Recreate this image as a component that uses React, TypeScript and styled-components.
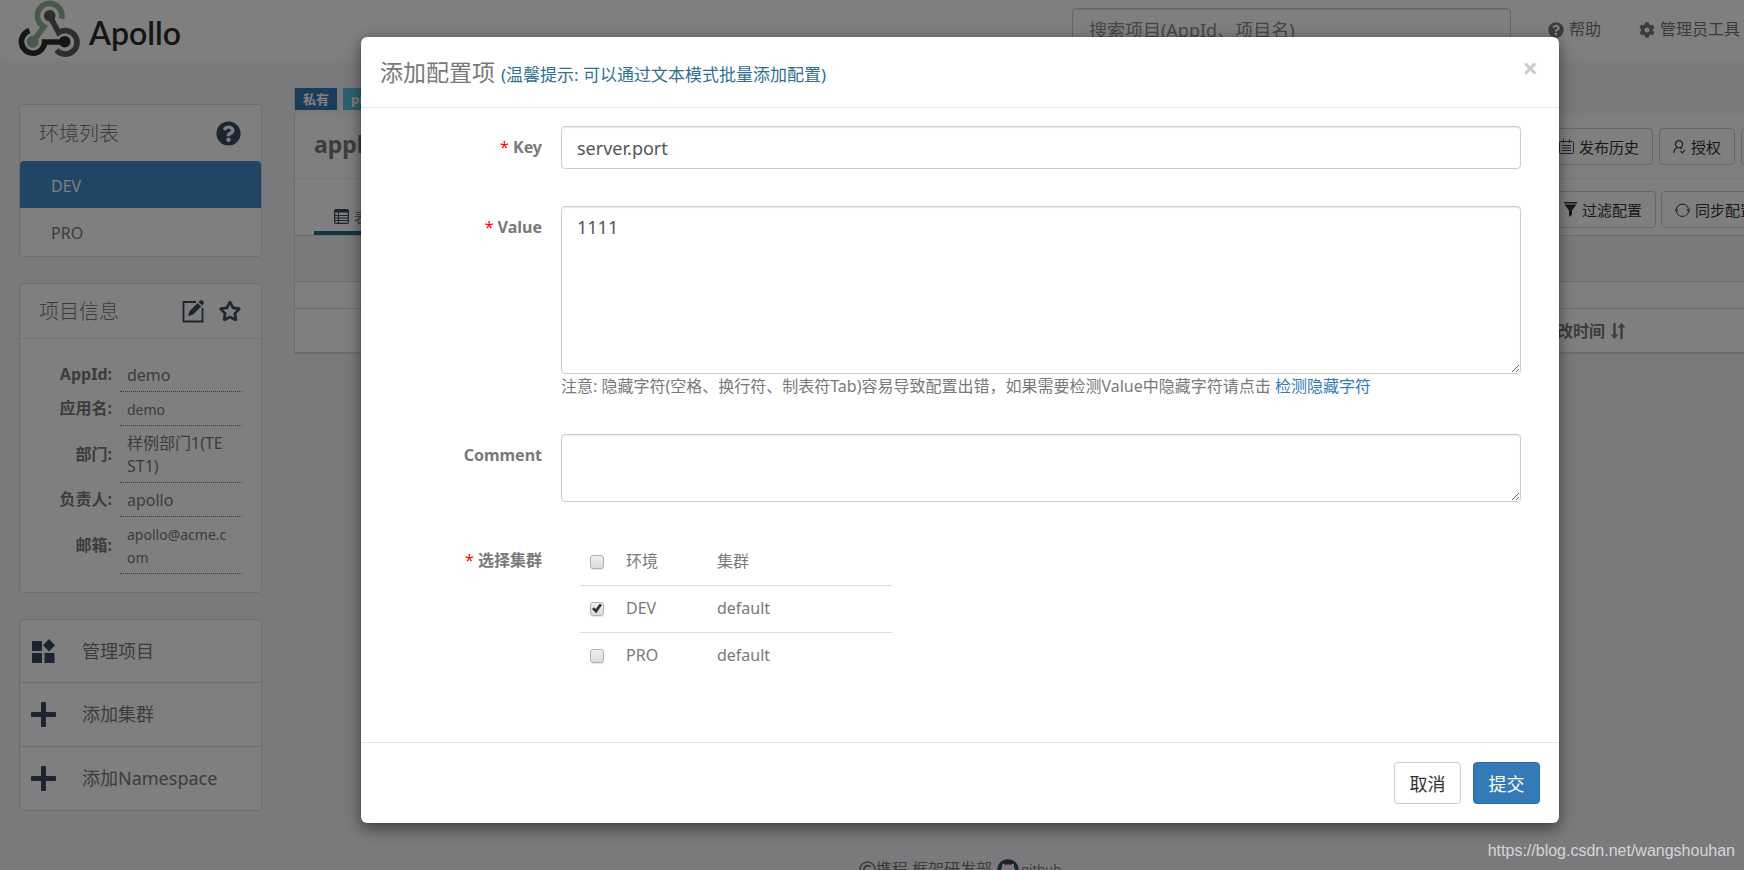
import React from "react";
import styled, { createGlobalStyle, css } from "styled-components";
import { FaQuestionCircle, FaRegStar, FaCog, FaGithub, FaRegCopyright } from "react-icons/fa";

const NAVY = "#364a63";
const LINE = "#dddddd";

const GlobalStyle = createGlobalStyle`
  *, *::before, *::after { box-sizing: border-box; }
  body {
    margin: 0;
    background: #f4f4f8;
    color: #797979;
    font-family: "Noto Sans", "Noto Sans CJK SC", sans-serif;
    font-size: 16px;
    line-height: 23px;
  }
  input, textarea, button { font-family: inherit; }
  h1, h2, h3, p, dl, dd, ul { margin: 0; padding: 0; font-weight: inherit; }
`;

const Viewport = styled.div`
  position: relative;
  height: 100vh;
  overflow: hidden;
`;

const Desktop = styled.div`
  position: relative;
  width: calc(100% + 176px);
  min-height: 100vh;
`;

/* ---------- top bar ---------- */

const NavBar = styled.header`
  display: flex;
  align-items: flex-start;
  height: 61px;
  padding: 0 180px 0 18px;
  background: #fff;
  border-radius: 4px;
`;

const Brand = styled.a`
  display: flex;
  align-items: center;
  gap: 8px;
  height: 60px;
  margin-right: auto;
  color: #2b2b2b;
  font-family: Lato, sans-serif;
  font-size: 32px;
  font-weight: 600;
  text-decoration: none;
  span { padding-top: 4px; }
`;

const SearchBox = styled.input`
  width: 439px;
  height: 43px;
  margin-top: 8px;
  padding: 0 16px;
  border: 1px solid #ccc;
  border-radius: 4px;
  background: #fff;
  box-shadow: inset 0 1px 1px rgba(0, 0, 0, 0.08);
  font-size: 18px;
  &::placeholder { color: #8c8c8c; opacity: 1; }
`;

const NavLinks = styled.nav`
  display: flex;
  gap: 38px;
  margin: 18px 0 0 37px;
`;

const NavLink = styled.a`
  display: flex;
  align-items: center;
  gap: 5px;
  color: #777;
  text-decoration: none;
  white-space: nowrap;
`;

/* ---------- page columns ---------- */

const Columns = styled.div`
  display: flex;
  align-items: flex-start;
  gap: 32px;
  padding: 25px 20px 18px 19px;
`;

const Sidebar = styled.aside`
  display: flex;
  flex: none;
  flex-direction: column;
  gap: 26px;
  width: 243px;
  padding-top: 18px;
`;

const Panel = styled.section`
  border: 1px solid ${LINE};
  border-radius: 4px;
  background: #fff;
`;

const PanelHead = styled.div<{ $ruled?: boolean }>`
  display: flex;
  align-items: center;
  gap: 14px;
  height: ${(p) => (p.$ruled ? "55px" : "56px")};
  padding: 0 20px 0 19px;
  border-bottom: ${(p) => (p.$ruled ? "1px solid #e6e6f0" : "0")};
  color: ${NAVY};
`;

const PanelTitle = styled.h2`
  margin-right: auto;
  color: #797979;
  font-size: 20px;
  font-weight: 300;
`;

const EnvLink = styled.a<{ $active?: boolean }>`
  display: flex;
  align-items: center;
  height: 48px;
  padding: 3px 31px 0;
  color: #797979;
  text-decoration: none;
  ${(p) =>
    p.$active &&
    css`
      height: 47px;
      border-radius: 4px 4px 0 0;
      background: #428bca;
      color: #fff;
    `}
`;

const Facts = styled.table`
  width: 100%;
  margin: 19px 0 18px;
  border-collapse: collapse;
  table-layout: fixed;
`;

const FactName = styled.th`
  width: 100px;
  padding: 0 8px 0 0;
  text-align: right;
  white-space: nowrap;
`;

const FactValue = styled.td<{ $small?: boolean }>`
  padding: 6px 12px 4px 7px;
  border-bottom: 1px dotted #797979;
  font-size: ${(p) => (p.$small ? "14px" : "16px")};
  word-break: break-all;
`;

const FactEnd = styled.td`
  width: 19px;
  padding: 0;
`;

const ActionLink = styled.a`
  display: flex;
  align-items: center;
  gap: 25px;
  height: 64px;
  padding: 0 11px;
  color: #797979;
  font-size: 18px;
  text-decoration: none;
  &:first-child { height: 62px; }
  & + & { border-top: 1px solid ${LINE}; }
  svg { flex: none; color: ${NAVY}; }
`;

/* ---------- namespace area ---------- */

const Namespace = styled.main`
  flex: 1;
  min-width: 0;
  border-left: 1px solid ${LINE};
  border-bottom: 2px solid ${LINE};
  margin-bottom: 20px;
`;

const Tags = styled.div`
  display: flex;
  gap: 6px;
  height: 29px;
  padding-top: 2px;
`;

const Tag = styled.span<{ $color: string }>`
  height: 22px;
  padding: 0 8px;
  background: ${(p) => p.$color};
  color: #fff;
  font-size: 13px;
  font-weight: 700;
  line-height: 22px;
`;

const TitleBar = styled.div`
  display: flex;
  align-items: center;
  gap: 6px;
  height: 64px;
  padding: 0 60px 0 19px;
  border-bottom: 1px solid #eee;
  background: #fff;
`;

const NamespaceTitle = styled.h1`
  margin-right: auto;
  padding-bottom: 4px;
  font-size: 23px;
  font-weight: 700;
`;

const TabBar = styled.div`
  display: flex;
  align-items: flex-start;
  gap: 5px;
  height: 56px;
  padding: 12px 56px 0 19px;
  background: #fff;
`;

const Tab = styled.button`
  display: flex;
  align-items: center;
  gap: 5px;
  height: 44px;
  margin-right: auto;
  padding: 10px 18px 0 20px;
  border: 0;
  border-bottom: 4px solid #1f6f86;
  background: none;
  color: #797979;
  font-size: 15px;
  svg { color: ${NAVY}; }
`;

const ToolButton = styled.button`
  display: flex;
  align-items: center;
  gap: 5px;
  height: 37px;
  padding: 0 13px;
  border: 1px solid #ccc;
  border-radius: 4px;
  background: #fff;
  color: #333;
  font-size: 15px;
  white-space: nowrap;
`;

const BlankButton = styled(ToolButton)<{ $width: number }>`
  width: ${(p) => p.$width}px;
`;

const GreyBand = styled.div`
  height: 47px;
  border-top: 1px solid ${LINE};
  border-bottom: 1px solid ${LINE};
  background: #f5f5f5;
`;

const WhiteBand = styled.div`
  height: 26px;
  background: #fff;
`;

const ItemTable = styled.table`
  width: 100%;
  border-collapse: collapse;
  border-top: 1px solid ${LINE};
  background: #fff;
  table-layout: fixed;
`;

const ItemHead = styled.th<{ $width?: number }>`
  width: ${(p) => (p.$width ? `${p.$width}px` : "auto")};
  height: 43px;
  padding: 2px 0 0;
  text-align: left;
  svg { margin-left: 5px; vertical-align: -2px; }
`;

const PageFooter = styled.footer`
  display: flex;
  justify-content: center;
  align-items: center;
  height: 80px;
  border-top: 1px solid #eeeef2;
  svg { flex: none; }
`;

const GithubLink = styled.a`
  display: flex;
  align-items: center;
  gap: 2px;
  margin-left: 5px;
  color: #797979;
  font-size: 13px;
  text-decoration: none;
  svg { color: ${NAVY}; }
`;

/* ---------- dialog ---------- */

const Backdrop = styled.div`
  position: absolute;
  inset: 0;
  display: flex;
  justify-content: center;
  align-items: flex-start;
  padding-top: 37px;
  background: rgba(0, 0, 0, 0.5);
`;

const Dialog = styled.form`
  width: 1198px;
  border-radius: 6px;
  background: #fff;
  box-shadow: 0 5px 15px rgba(0, 0, 0, 0.5), 0 0 1px rgba(0, 0, 0, 0.4);
`;

const DialogHead = styled.div`
  display: flex;
  justify-content: space-between;
  align-items: flex-start;
  height: 71px;
  padding: 19px 21px 0 19px;
  border-bottom: 1px solid #e5e5e5;
`;

const DialogTitle = styled.h2`
  font-size: 23px;
  line-height: 32px;
  small { color: #31708f; font-size: 17px; }
`;

const CloseButton = styled.button`
  padding: 0;
  border: 0;
  background: none;
  color: #ccc;
  font-size: 27px;
  font-weight: 700;
  line-height: 24px;
`;

const DialogBody = styled.div`
  display: grid;
  grid-template-columns: 181px 1fr;
  gap: 37px 19px;
  padding: 18px 38px 63px 0;
`;

const FieldName = styled.label`
  padding-top: 10px;
  font-weight: 700;
  text-align: right;
`;

const Required = styled.span`
  color: #f00;
  font-weight: 400;
`;

const fieldLook = css`
  display: block;
  width: 100%;
  padding: 7px 15px;
  border: 1px solid #ccc;
  border-radius: 4px;
  background: #fff;
  box-shadow: inset 0 1px 1px rgba(0, 0, 0, 0.08);
  color: #555;
  font-size: 18px;
  line-height: 27px;
`;

const TextInput = styled.input`
  ${fieldLook}
  height: 43px;
`;

const TextArea = styled.textarea<{ $height: number }>`
  ${fieldLook}
  height: ${(p) => p.$height}px;
  resize: vertical;
`;

const Hint = styled.p`
  padding-top: 1px;
  line-height: 22px;
  a { color: #337ab7; text-decoration: none; }
`;

const ClusterTable = styled.table`
  width: 312px;
  margin-left: 19px;
  border-collapse: collapse;
  table-layout: fixed;
  tr + tr { border-top: 1px solid ${LINE}; }
  tr:first-child td { height: 46px; }
`;

const ClusterCell = styled.td<{ $width?: number }>`
  width: ${(p) => (p.$width ? `${p.$width}px` : "auto")};
  height: 47px;
  padding: 0 0 0 8px;
  input { display: block; margin: 0 0 0 2px; }
`;

const Check = styled.input`
  position: relative;
  width: 14px;
  height: 14px;
  appearance: none;
  border: 1px solid #b0b0b0;
  border-radius: 3px;
  background: linear-gradient(#eee, #dcdcdc);
  box-shadow: 0 1px 1px rgba(0, 0, 0, 0.1);
  &:checked::before {
    content: "";
    position: absolute;
    inset: 1px;
    background: #333;
    clip-path: polygon(0 55%, 20% 38%, 38% 55%, 78% 0, 100% 14%, 42% 98%);
  }
`;

const DialogFoot = styled.div`
  display: flex;
  justify-content: flex-end;
  gap: 12px;
  padding: 19px;
  border-top: 1px solid #e5e5e5;
`;

const DialogButton = styled.button<{ $primary?: boolean }>`
  width: 67px;
  height: 42px;
  padding: 0;
  border: 1px solid ${(p) => (p.$primary ? "#2e6da4" : "#ccc")};
  border-radius: 4px;
  background: ${(p) => (p.$primary ? "#337ab7" : "#fff")};
  color: ${(p) => (p.$primary ? "#fff" : "#333")};
  font-size: 18px;
`;

const Watermark = styled.span`
  position: absolute;
  right: 9px;
  bottom: 8px;
  color: rgba(255, 255, 255, 0.7);
  font-family: "Liberation Sans", sans-serif;
  font-size: 16px;
`;

/* ---------- drawings ---------- */

const ApolloMark = () => (
  <svg width="63" height="60" viewBox="18 0 63 60" fill="none" aria-hidden="true">
    <g strokeWidth="5.6">
      <path d="M61.6 18.8A12.3 12.3 0 1 0 42.6 25.8L44 26.6L32.7 41.7" stroke="#8fb09a" />
      <path d="M49.7 15.7L58.6 32.6A11.8 11.8 0 1 1 56.4 50.2" stroke="#5e5a5c" />
      <path d="M29.4 30.6A11.6 11.6 0 1 0 44.6 42H64.7" stroke="#2a2a2b" />
    </g>
    <circle cx="32.7" cy="41.7" r="6" fill="#8fb09a" />
    <circle cx="49.7" cy="15.7" r="5.8" fill="#5e5a5c" />
    <circle cx="64.7" cy="41.7" r="5.8" fill="#2a2a2b" />
  </svg>
);

const EditIcon = () => (
  <svg width="24" height="24" viewBox="0 0 24 24" aria-hidden="true">
    <path d="M15 3H2.5V22.5H21.5V9" fill="none" stroke="currentColor" strokeWidth="1.8" />
    <path d="M7 17l1.6-5 8-8 3.6 3.6-8 8z" fill="currentColor" />
    <path d="M17.6 3l1.6-1.6q.9-.8 1.8 0l1.6 1.6q.9.9 0 1.8L21 6.4z" fill="currentColor" />
  </svg>
);

const BlocksIcon = () => (
  <svg width="26" height="26" viewBox="0 0 26 26" fill="currentColor" aria-hidden="true">
    <path d="M1 3h10v10H1zM1 15h10v10H1zM13.500 15h10v10h-10zM18 1l6 6.300-6 6.300-6-6.300z" />
  </svg>
);

const PlusIcon = () => (
  <svg width="26" height="26" viewBox="0 0 26 26" fill="currentColor" aria-hidden="true">
    <rect x="10" y="0" width="5" height="25" rx="1" />
    <rect x="0" y="10" width="25" height="5" rx="1" />
  </svg>
);

const ListIcon = () => (
  <svg width="15" height="15" viewBox="0 0 15 15" fill="none" stroke="currentColor" aria-hidden="true">
    <rect x="0.600" y="0.600" width="13.800" height="13.800" rx="1.500" strokeWidth="1.200" />
    <path d="M1 2h13" strokeWidth="3" />
    <path d="M4.500 2v12M1 6.500h13M1 9h13M1 11.500h13" />
  </svg>
);

const CalendarIcon = () => (
  <svg width="15" height="15" viewBox="0 0 15 15" fill="none" stroke={NAVY} aria-hidden="true">
    <rect x="0.500" y="2.500" width="14" height="12" rx="1" />
    <path d="M4.500 0v4M10.500 0v4M3 6.500h9M3 9h9M3 11.500h9" />
  </svg>
);

const UserIcon = () => (
  <svg width="13" height="14" viewBox="0 0 13 14" fill="none" stroke={NAVY} strokeWidth="1.200" aria-hidden="true">
    <circle cx="6" cy="4.200" r="3.500" />
    <path d="M4.500 7.500Q1 9 .7 13M7.500 7.500L9 9M7.500 11l1.800 1.800L12 10" />
  </svg>
);

const FunnelIcon = () => (
  <svg width="13" height="15" viewBox="0 0 13 15" fill="currentColor" aria-hidden="true">
    <path d="M0 0h13v1.500H0zM.5 2.500h12L8 8.500v4L5 15V8.500z" />
  </svg>
);

const SyncIcon = () => (
  <svg width="15" height="14" viewBox="0 0 15 14" fill="none" stroke={NAVY} strokeWidth="1.100" aria-hidden="true">
    <path d="M1.300 6.500A6.200 6.200 0 0 1 13.600 6.500M13.700 8A6.200 6.200 0 0 1 1.400 8M0 8l1.400-1.700L3 7.800M12 6.500l1.600 1.600L15 6.500" />
  </svg>
);

const SortIcon = () => (
  <svg width="16" height="16" viewBox="0 0 16 16" aria-hidden="true">
    <path d="M4.500 0v13M11.500 3v13" stroke="currentColor" strokeWidth="2.400" />
    <path d="M.5 11.500h8l-4 4.500zM7.500 4.500h8l-4-4.500z" fill="currentColor" />
  </svg>
);

/* ---------- data ---------- */

const facts = [
  { name: "AppId:", value: "demo" },
  { name: "应用名:", value: "demo", small: true },
  { name: "部门:", value: "样例部门1(TEST1)" },
  { name: "负责人:", value: "apollo" },
  { name: "邮箱:", value: "apollo@acme.com", small: true },
];

const clusters = [
  { env: "DEV", cluster: "default", checked: true },
  { env: "PRO", cluster: "default", checked: false },
];

export default function App() {
  return (
    <Viewport>
      <GlobalStyle />
      <Desktop>
        <NavBar>
          <Brand href="#"><ApolloMark /><span>Apollo</span></Brand>
          <SearchBox aria-label="搜索项目" placeholder="搜索项目(AppId、项目名)" />
          <NavLinks>
            <NavLink href="#"><FaQuestionCircle size={16} />帮助</NavLink>
            <NavLink href="#"><FaCog size={16} />管理员工具</NavLink>
          </NavLinks>
        </NavBar>

        <Columns>
          <Sidebar>
            <Panel>
              <PanelHead>
                <PanelTitle>环境列表</PanelTitle>
                <FaQuestionCircle size={25} />
              </PanelHead>
              <EnvLink href="#" $active>DEV</EnvLink>
              <EnvLink href="#">PRO</EnvLink>
            </Panel>

            <Panel>
              <PanelHead $ruled>
                <PanelTitle>项目信息</PanelTitle>
                <EditIcon />
                <FaRegStar size={22} stroke="currentColor" strokeWidth={24} />
              </PanelHead>
              <Facts>
                <tbody>
                  {facts.map((f) => (
                    <tr key={f.name}>
                      <FactName scope="row">{f.name}</FactName>
                      <FactValue $small={f.small}>{f.value}</FactValue>
                      <FactEnd />
                    </tr>
                  ))}
                </tbody>
              </Facts>
            </Panel>

            <Panel>
              <ActionLink href="#"><BlocksIcon />管理项目</ActionLink>
              <ActionLink href="#"><PlusIcon />添加集群</ActionLink>
              <ActionLink href="#"><PlusIcon />添加Namespace</ActionLink>
            </Panel>
          </Sidebar>

          <Namespace>
            <Tags>
              <Tag $color="#337ab7">私有</Tag>
              <Tag $color="#5bc0de">properties</Tag>
            </Tags>
            <TitleBar>
              <NamespaceTitle>application</NamespaceTitle>
              <ToolButton type="button"><CalendarIcon />发布历史</ToolButton>
              <ToolButton type="button"><UserIcon />授权</ToolButton>
              <BlankButton type="button" aria-label="更多" $width={99} />
            </TitleBar>
            <TabBar>
              <Tab type="button"><ListIcon />表格</Tab>
              <ToolButton type="button"><FunnelIcon />过滤配置</ToolButton>
              <ToolButton type="button"><SyncIcon />同步配置</ToolButton>
              <BlankButton type="button" aria-label="更多" $width={70} />
            </TabBar>
            <GreyBand />
            <WhiteBand />
            <ItemTable>
              <thead>
                <tr>
                  <ItemHead />
                  <ItemHead $width={391}>最后修改时间<SortIcon /></ItemHead>
                </tr>
              </thead>
            </ItemTable>
          </Namespace>
        </Columns>

        <PageFooter>
          <FaRegCopyright size={17} />携程 框架研发部
          <GithubLink href="#"><FaGithub size={22} />github</GithubLink>
        </PageFooter>

        <Backdrop>
          <Dialog role="dialog" aria-labelledby="dialog-title">
            <DialogHead>
              <DialogTitle id="dialog-title">
                添加配置项 <small>(温馨提示: 可以通过文本模式批量添加配置)</small>
              </DialogTitle>
              <CloseButton type="button" aria-label="关闭">×</CloseButton>
            </DialogHead>
            <DialogBody>
              <FieldName htmlFor="item-key"><Required>*</Required> Key</FieldName>
              <TextInput id="item-key" defaultValue="server.port" />

              <FieldName htmlFor="item-value"><Required>*</Required> Value</FieldName>
              <div>
                <TextArea id="item-value" $height={168} defaultValue="1111" />
                <Hint>
                  注意: 隐藏字符(空格、换行符、制表符Tab)容易导致配置出错，如果需要检测Value中隐藏字符请点击 <a href="#">检测隐藏字符</a>
                </Hint>
              </div>

              <FieldName htmlFor="item-comment">Comment</FieldName>
              <TextArea id="item-comment" $height={68} />

              <FieldName as="div" id="cluster-label"><Required>*</Required> 选择集群</FieldName>
              <ClusterTable aria-labelledby="cluster-label">
                <tbody>
                  <tr>
                    <ClusterCell $width={38}><Check type="checkbox" aria-label="全选" /></ClusterCell>
                    <ClusterCell $width={91}>环境</ClusterCell>
                    <ClusterCell>集群</ClusterCell>
                  </tr>
                  {clusters.map((c) => (
                    <tr key={c.env}>
                      <ClusterCell><Check type="checkbox" aria-label={c.env} defaultChecked={c.checked} /></ClusterCell>
                      <ClusterCell>{c.env}</ClusterCell>
                      <ClusterCell>{c.cluster}</ClusterCell>
                    </tr>
                  ))}
                </tbody>
              </ClusterTable>
            </DialogBody>
            <DialogFoot>
              <DialogButton type="button">取消</DialogButton>
              <DialogButton type="button" $primary>提交</DialogButton>
            </DialogFoot>
          </Dialog>
        </Backdrop>
      </Desktop>
      <Watermark>https://blog.csdn.net/wangshouhan</Watermark>
    </Viewport>
  );
}
